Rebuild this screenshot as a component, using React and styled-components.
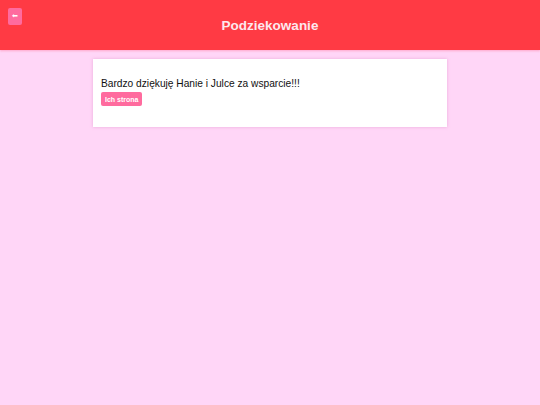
import React from "react";
import styled, { createGlobalStyle } from "styled-components";

const Global = createGlobalStyle`
  html, body { margin: 0; padding: 0; }
  body {
    background: #ffd6f7;
    font-family: "Liberation Sans", Arial, sans-serif;
    min-height: 405px;
  }
`;

const Header = styled.header`
  position: relative;
  height: 50px;
  background: #ff3a44;
  display: flex;
  align-items: center;
  justify-content: center;
  box-shadow: 0 1px 2px rgba(255, 80, 120, 0.35);
`;

const Title = styled.h1`
  margin: 0;
  color: #fde8ee;
  font-size: 13.5px;
  font-weight: bold;
`;

const BackButton = styled.button`
  position: absolute;
  left: 8px;
  top: 8px;
  width: 14px;
  height: 17px;
  padding: 0;
  border: none;
  border-radius: 2px;
  background: #ff6b9e;
  color: #fff;
  font-size: 7px;
  line-height: 17px;
  font-family: "DejaVu Sans", sans-serif;
  cursor: pointer;
`;

const Main = styled.main`
  display: flex;
  justify-content: center;
  padding-top: 9px;
`;

const Card = styled.section`
  width: 354px;
  box-sizing: border-box;
  background: #fff;
  padding: 19px 8px 21px 8px;
  box-shadow: 0 0 3px rgba(220, 140, 200, 0.6);
`;

const Text = styled.p`
  margin: 0;
  font-size: 10.2px;
  line-height: 12px;
  color: #111;
`;

const PinkButton = styled.button`
  display: block;
  margin-top: 2px;
  height: 14px;
  padding: 0 4px;
  border: none;
  border-radius: 2px;
  background: #ff6b9e;
  color: #fff;
  font-family: "Liberation Sans", Arial, sans-serif;
  font-size: 7px;
  font-weight: bold;
  cursor: pointer;
`;

export default function App() {
  return (
    <>
      <Global />
      <Header>
        <BackButton aria-label="Wstecz">⬅</BackButton>
        <Title>Podziekowanie</Title>
      </Header>
      <Main>
        <Card>
          <Text>Bardzo dziękuję Hanie i Julce za wsparcie!!!</Text>
          <PinkButton>Ich strona</PinkButton>
        </Card>
      </Main>
    </>
  );
}
